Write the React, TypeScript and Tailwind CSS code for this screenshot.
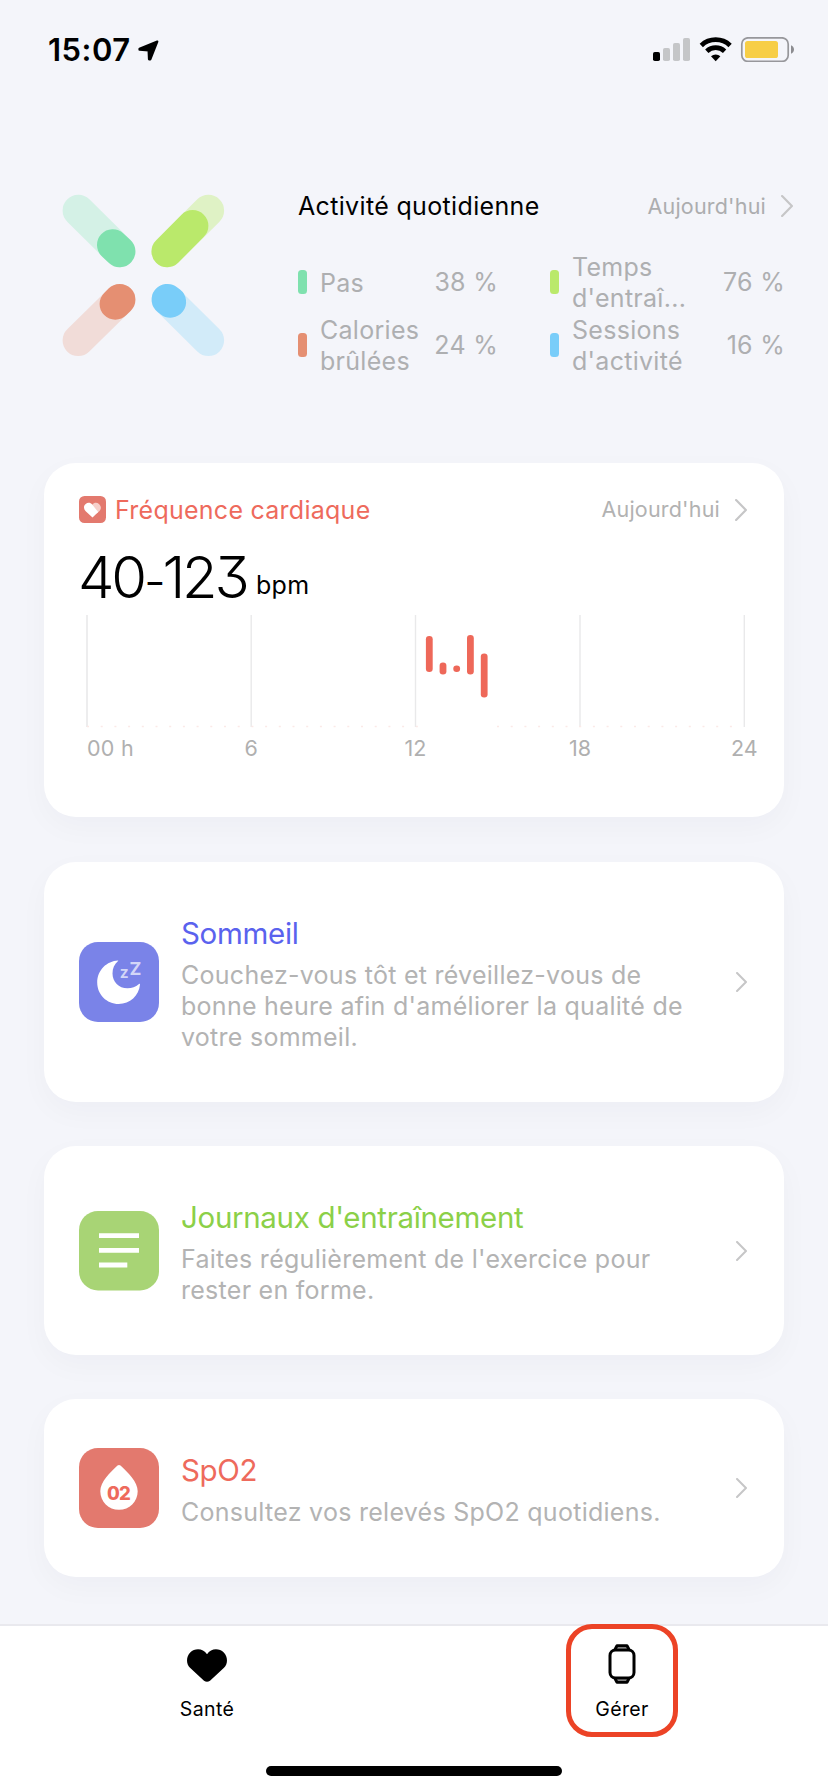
import type { ReactNode } from 'react';

const rings = [
  { color: '#7fe1ae', track: '#d4f1e6', from: [119.7, 251.5], to: [112.7, 245], end: [78.3, 210.5] },
  { color: '#bae96b', track: '#dff2c5', from: [167.2, 251.5], to: [192.7, 225.8], end: [208.4, 210.5] },
  { color: '#e58f72', track: '#f1dcd8', from: [119.7, 299.6], to: [115.3, 304], end: [78.3, 340.4] },
  { color: '#79cdf9', track: '#d2ebf9', from: [167.3, 299.6], to: [170.4, 302], end: [208.4, 340.4] },
];

const heartBars = [
  [429.3, 636, 672],
  [443, 662.5, 674.5],
  [456.7, 665.5, 672],
  [470.4, 635, 674.5],
  [484.2, 653.5, 697.5],
];

const hours = [
  { x: 251.2, label: '6' },
  { x: 415.5, label: '12' },
  { x: 580, label: '18' },
  { x: 744.3, label: '24' },
];

function Chevron({ className }: { className: string }) {
  return (
    <svg viewBox="0 0 12 22" className={className} fill="none" stroke="#c6c6c7" strokeWidth="2.2" strokeLinecap="round" strokeLinejoin="round">
      <path d="M1.1 1.1L10.9 11L1.1 20.9" />
    </svg>
  );
}

function Today({ className }: { className: string }) {
  return (
    <div className={`flex items-center text-[21.5px] tracking-[0.2px] ${className}`}>
      <span className="whitespace-nowrap">Aujourd'hui</span>
      <Chevron className="ml-[15px] h-[22px] w-[12px]" />
    </div>
  );
}

function StatusBar() {
  return (
    <div className="flex h-[100px] items-start justify-between pl-[48px] pr-[34px] pt-[30px]">
      <div className="flex items-start">
        <span className="w-[90px] whitespace-nowrap text-[31px] font-semibold leading-[40px] tracking-[0.5px]">15:07</span>
        <svg width="21" height="21" viewBox="0 0 21 21" className="mt-[9.5px]">
          <path d="M19.3 1.6L1.5 8.7V9.7L10.6 10.3L11 19.3H12.3L19.3 1.6Z" stroke="#000" strokeWidth="2.2" strokeLinejoin="round" />
        </svg>
      </div>
      <svg width="141" height="25" viewBox="653 37 141 25" className="mt-[7px]">
        <rect x="653" y="52" width="7" height="9" rx="1.8" />
        <rect x="663" y="48" width="7" height="13" rx="1.8" fill="#c5c6c8" />
        <rect x="673" y="43" width="7" height="18" rx="1.8" fill="#c5c6c8" />
        <rect x="683" y="38" width="7" height="23" rx="1.8" fill="#c5c6c8" />
        <path d="M701.3 45.4a21 21 0 0 1 28.8 0" fill="none" stroke="#000" strokeWidth="4.8" />
        <path d="M706.8 51.2a13 13 0 0 1 17.8 0" fill="none" stroke="#000" strokeWidth="4.8" />
        <path d="M711 56.3a7 7 0 0 1 9.4 0L715.7 61.2Z" />
        <rect x="741.8" y="37.8" width="46.4" height="23.6" rx="6.2" fill="none" stroke="#97979b" strokeWidth="1.7" />
        <rect x="745" y="41" width="33" height="17" rx="2.6" fill="#f7ce46" />
        <path d="M791 45.3c4 1.4 4 7 0 8.4z" fill="#8c8c90" />
      </svg>
    </div>
  );
}

function Legend({ bar, value, children }: { bar: string; value: string; children: ReactNode }) {
  return (
    <div className="flex h-[62px] items-center">
      <span className={`h-[24px] w-[9px] shrink-0 rounded-[3.5px] ${bar}`} />
      <span className="ml-[13px] flex-1 whitespace-nowrap pt-[2px]">{children}</span>
      <span className="whitespace-nowrap pt-[1px]">{value}</span>
    </div>
  );
}

function DailyActivity() {
  return (
    <section className="flex h-[363px]">
      <svg width="298" height="280" viewBox="0 100 298 280" strokeLinecap="round" strokeWidth="31.4" className="shrink-0">
        {rings.map((r) => (
          <g key={r.color}>
            <line x1={r.from[0]} y1={r.from[1]} x2={r.end[0]} y2={r.end[1]} stroke={r.track} />
            <line x1={r.from[0]} y1={r.from[1]} x2={r.to[0]} y2={r.to[1]} stroke={r.color} />
          </g>
        ))}
      </svg>
      <div className="flex-1">
        <div className="mt-[86px] flex h-[40px] items-center justify-between pr-[35px]">
          <h2 className="whitespace-nowrap pt-[2px] text-[25px] tracking-[0.34px]">Activité quotidienne</h2>
          <Today className="text-[#acadaf]" />
        </div>
        <div className="mt-[25px] grid grid-cols-[200px_235px] gap-x-[52px] gap-y-px text-[25px] leading-[31px] tracking-[0.28px] text-[#aeafb1]">
          <Legend bar="bg-[#7fe1ae]" value="38 %">Pas</Legend>
          <Legend bar="bg-[#bae96b]" value="76 %">Temps<br />d'entraî...</Legend>
          <Legend bar="bg-[#e58f72]" value="24 %">Calories<br />brûlées</Legend>
          <Legend bar="bg-[#79cdf9]" value="16 %">Sessions<br />d'activité</Legend>
        </div>
      </div>
    </section>
  );
}

function HeartRateCard() {
  return (
    <section className="mb-px h-[354px] rounded-[32px] bg-white shadow-[0_10px_30px_rgba(30,35,50,0.03)]">
      <div className="flex h-[89px] items-center pl-[35px] pr-[37px] pt-[4px]">
        <svg width="27" height="27" viewBox="0 0 27 27">
          <rect width="27" height="27" rx="5.5" fill="#e3796e" />
          <path d="M13.5 8.6C15 6.3 18 6.3 20 7.9C22.6 10.4 22.3 13 20.3 15.2L17.7 17.6L11.5 10.5Z" fill="#f6cfca" />
          <path d="M13.5 21.6L6.7 15.2C4.4 12.9 4.4 9.6 6.7 7.9C8.7 6.3 11.5 6.4 13.2 8.6L19.2 16.1Z" fill="#fff" />
        </svg>
        <h2 className="ml-[9px] whitespace-nowrap pt-[2px] text-[25px] tracking-[0.26px] text-[#ee6a5c]">Fréquence cardiaque</h2>
        <Today className="ml-auto text-[#b2b2b2]" />
      </div>
      <div className="flex h-[62px] items-baseline pl-[34px]">
        <span className="w-[178px] whitespace-nowrap text-[58px] font-light leading-[50px] tracking-[-3.2px] [font-feature-settings:'cv09']">
          40<span className="text-[48px]">-</span>123
        </span>
        <span className="-translate-y-1 text-[25px] leading-[30px] tracking-[0.3px]">bpm</span>
      </div>
      <svg width="740" height="160" viewBox="44 614 740 160" className="block text-[21.5px]" fill="#b0b0b0">
        <line x1="87" x2="87" y1="615" y2="727" stroke="#ededee" strokeWidth="2" />
        {hours.map((h) => (
          <g key={h.label}>
            <line x1={h.x} x2={h.x} y1="615" y2="727" stroke="#e9e9ea" strokeWidth="1.4" />
            <text x={h.x} y="756" textAnchor="middle">{h.label}</text>
          </g>
        ))}
        <text x="87" y="756" letterSpacing="0.3">00 h</text>
        <line x1="87" x2="420" y1="726.5" y2="726.5" stroke="#fbe9e7" strokeWidth="1.4" strokeDasharray="2 11.7" />
        <line x1="497" x2="735" y1="726.5" y2="726.5" stroke="#fbe9e7" strokeWidth="1.4" strokeDasharray="2 11.7" />
        {heartBars.map(([x, top, bottom]) => (
          <rect key={x} x={x - 3.4} y={top} width="6.8" height={bottom - top} rx="3.3" fill="#ee6859" />
        ))}
      </svg>
    </section>
  );
}

type CardProps = { height: string; icon: ReactNode; title: string; titleColor: string; children: ReactNode };

function InfoCard({ height, icon, title, titleColor, children }: CardProps) {
  return (
    <section className={`flex items-center rounded-[32px] bg-white pl-[35px] pr-[37px] shadow-[0_10px_30px_rgba(30,35,50,0.03)] ${height}`}>
      {icon}
      <div className="ml-[22px] flex-1 whitespace-nowrap pt-[3px]">
        <h2 className={`text-[29.5px] leading-[38px] tracking-[-0.32px] ${titleColor}`}>{title}</h2>
        <p className="mt-[8px] text-[25px] leading-[31px] tracking-[0.27px] text-[#b3b3b3]">{children}</p>
      </div>
      <Chevron className="h-[20px] w-[11px]" />
    </section>
  );
}

function SleepIcon() {
  return (
    <svg width="80" height="80" viewBox="0 0 80 80" className="shrink-0">
      <rect width="80" height="80" rx="19" fill="#7a83e8" />
      <path d="M39 18.5C28 19 18.2 28 18.2 40.5C18.2 52.5 27.7 62 39.7 62C51 62 60 53.5 61 42.5C61 41.8 60.6 41.6 60 42C56.5 45.2 53 46.3 48.5 46.3C39.7 46.3 33.5 39.8 33.5 31.5C33.5 26.5 35.4 22.3 38.8 19.3C39.3 18.8 39.3 18.5 39 18.5Z" fill="#fff" />
      <g fill="#d3d6f7" fontWeight="700">
        <text x="40.7" y="36.2" fontSize="15.5">z</text>
        <text x="50.4" y="33.3" fontSize="17.9">Z</text>
      </g>
    </svg>
  );
}

function WorkoutIcon() {
  return (
    <svg width="80" height="80" viewBox="0 0 80 80" className="shrink-0">
      <rect width="80" height="79.4" rx="19" fill="#a8d475" />
      <path d="M20 24.6H60M20 39.4H60M20 54H48.3" stroke="#fff" strokeWidth="4.8" />
    </svg>
  );
}

function OxygenIcon() {
  return (
    <svg width="80" height="80" viewBox="0 0 80 80" className="shrink-0">
      <rect width="80" height="80" rx="19" fill="#e3796e" />
      <path d="M38.5 17.6Q40 16.2 41.5 17.6C49 24.8 58.7 34 58.7 43.2C58.7 53.6 50.4 61.8 40 61.8S21.3 53.6 21.3 43.2C21.3 34 31 24.8 38.5 17.6Z" fill="#fff" />
      <text x="39.6" y="52.2" textAnchor="middle" fontSize="18.5" fontWeight="800" letterSpacing="-0.6" fill="#ee6a5c">02</text>
    </svg>
  );
}

function TabBar() {
  return (
    <nav className="h-[168px] border-t-2 border-[#e9e9ee] bg-white text-[19.5px] leading-[24px] tracking-[0.35px]">
      <div className="grid h-[140px] grid-cols-2">
        <div className="flex flex-col items-center pt-[23px]">
          <svg width="40" height="33" viewBox="0 0 40 33">
            <path d="M20 5.2C24-.8 32-1.2 36.8 3.6C41 8.2 41 14.5 37 18.8L23 31.7Q20 34 17 31.7L3 18.8C-1 14.5-1 8.2 3.2 3.6C8-1.2 16-.8 20 5.2Z" />
          </svg>
          <span className="mt-[15px]">Santé</span>
        </div>
        <div className="flex justify-center">
          <div className="-mt-[2px] ml-[2px] flex h-[113px] w-[112px] flex-col items-center rounded-[26px] border-[5px] border-[#ec4326] pt-[15px]">
            <svg width="28" height="40" viewBox="0 0 28 40" fill="none" stroke="#000" strokeWidth="3" strokeLinejoin="round">
              <path d="M7 5.5L9 1.7H19L21 5.5M7 34.5L9 38.3H19L21 34.5" fill="#aaa" />
              <rect x="2" y="6" width="24" height="28" rx="5.5" fill="#fff" />
            </svg>
            <span className="mt-[13px]">Gérer</span>
          </div>
        </div>
      </div>
      <div className="mx-auto h-[10px] w-[296px] rounded-full bg-black" />
    </nav>
  );
}

export default function App() {
  return (
    <div className="flex h-[1792px] w-[828px] flex-col overflow-hidden bg-[#f4f5fa] font-['Inter',sans-serif] text-black">
      <StatusBar />
      <DailyActivity />
      <main className="flex flex-1 flex-col gap-11 px-11">
        <HeartRateCard />
        <InfoCard height="h-[240px]" icon={<SleepIcon />} title="Sommeil" titleColor="text-[#5a62ee]">
          Couchez-vous tôt et réveillez-vous de<br />bonne heure afin d'améliorer la qualité de<br />votre sommeil.
        </InfoCard>
        <InfoCard height="h-[209px]" icon={<WorkoutIcon />} title="Journaux d'entraînement" titleColor="text-[#8bd048]">
          Faites régulièrement de l'exercice pour<br />rester en forme.
        </InfoCard>
        <InfoCard height="h-[178px]" icon={<OxygenIcon />} title="SpO2" titleColor="text-[#ee6a5c]">
          Consultez vos relevés SpO2 quotidiens.
        </InfoCard>
      </main>
      <TabBar />
    </div>
  );
}
